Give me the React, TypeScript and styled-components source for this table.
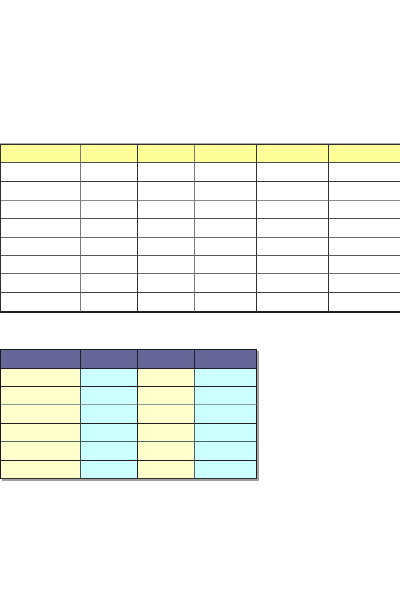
import React from "react";
import styled, { createGlobalStyle } from "styled-components";

const Global = createGlobalStyle`
  html, body { margin: 0; padding: 0; background: #fff; overflow: hidden; }
  body { font-family: "Liberation Sans", Arial, sans-serif; font-size: 11px; }
`;

const Page = styled.div`
  width: 400px;
  height: 600px;
  overflow: hidden;
  display: flex;
  flex-direction: column;
  align-items: flex-start;
  padding-top: 144px;
  box-sizing: border-box;
`;

const Grid = styled.div<{ $cols: number[]; $rows: number[]; $frame: string }>`
  display: grid;
  flex: none;
  grid-template-columns: ${(p) => p.$cols.map((c) => `${c}px`).join(" ")};
  grid-template-rows: ${(p) => p.$rows.map((r) => `${r}px`).join(" ")};
  border-top: 1px solid ${(p) => p.$frame};
  border-left: 1px solid ${(p) => p.$frame};
`;

const TopGrid = styled(Grid)`
  box-shadow: 0 -1px 0 #a8a8a8;
  border-bottom: 1px solid #202020;
`;

const BottomGrid = styled(Grid)`
  margin-top: 36px;
  box-shadow: 2px 2px 0 #a0a0a0;
`;

const Cell = styled.div<{ $bg: string; $v: string; $h: string }>`
  box-sizing: border-box;
  background: ${(p) => p.$bg};
  border-right: 1px solid ${(p) => p.$v};
  border-bottom: 1px solid ${(p) => p.$h};
`;

const topCols = [80, 57, 57, 62, 72, 80];
const topV = ["#7a7a7a", "#303030", "#7a7a7a", "#303030", "#303030", "#303030"];
const topRows = [18, 19, 19, 18, 19, 18, 18, 19, 19];
const topH = ["#4a4a4a", "#383838", "#8a8a8a", "#505050", "#6a6a6a", "#5a5a5a", "#6a6a6a", "#404040", "#202020"];

const botCols = [80, 57, 57, 62];
const botV = ["#3a5050", "#1e1e2e", "#4a6262", "#202020"];
const botRows = [19, 18, 18, 19, 18, 19, 18];
const botH = ["#1e1e2e", "#202020", "#8a9a9a", "#202020", "#4a6262", "#202020", "#303030"];
const botFills = ["#FFFFCC", "#CCFFFF", "#FFFFCC", "#CCFFFF"];

export default function App() {
  return (
    <>
      <Global />
      <Page>
        <TopGrid $cols={topCols} $rows={topRows} $frame="#303030">
          {topRows.map((_, r) =>
            topCols.map((__, c) => (
              <Cell
                key={`${r}-${c}`}
                $bg={r === 0 ? "#FFFF99" : "#FFFFFF"}
                $v={topV[c]}
                $h={topH[r]}
              />
            ))
          )}
        </TopGrid>
        <BottomGrid $cols={botCols} $rows={botRows} $frame="#1a1a1a">
          {botRows.map((_, r) =>
            botCols.map((__, c) => (
              <Cell
                key={`${r}-${c}`}
                $bg={r === 0 ? "#666699" : botFills[c]}
                $v={r === 0 ? "#1e1e2e" : botV[c]}
                $h={botH[r]}
              />
            ))
          )}
        </BottomGrid>
      </Page>
    </>
  );
}
